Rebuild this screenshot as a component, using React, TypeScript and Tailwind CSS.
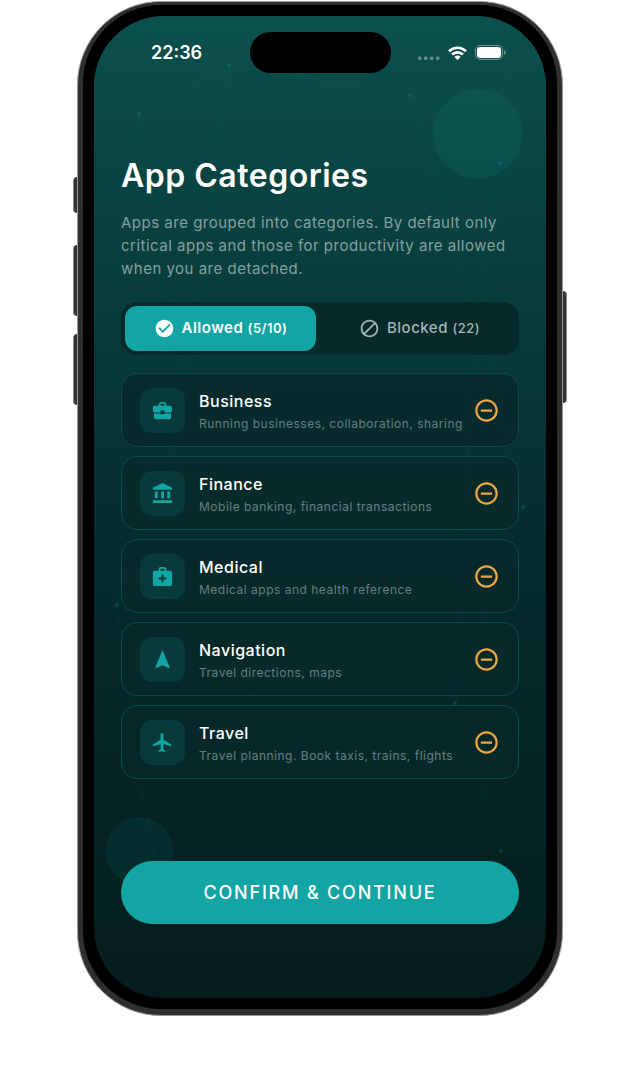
import React, { useState } from "react";
import {
  MdAccountBalance,
  MdBlock,
  MdBusinessCenter,
  MdCheckCircle,
  MdFlight,
  MdMedicalServices,
  MdNavigation,
  MdRemoveCircleOutline,
} from "react-icons/md";
import type { IconType } from "react-icons";

type Category = {
  name: string;
  description: string;
  icon: IconType;
};

const categories: Category[] = [
  {
    name: "Business",
    description: "Running businesses, collaboration, sharing",
    icon: MdBusinessCenter,
  },
  {
    name: "Finance",
    description: "Mobile banking, financial transactions",
    icon: MdAccountBalance,
  },
  {
    name: "Medical",
    description: "Medical apps and health reference",
    icon: MdMedicalServices,
  },
  {
    name: "Navigation",
    description: "Travel directions, maps",
    icon: MdNavigation,
  },
  {
    name: "Travel",
    description: "Travel planning. Book taxis, trains, flights",
    icon: MdFlight,
  },
];

const nodes = [
  [45, 98],
  [135, 49],
  [316, 79],
  [406, 147],
  [429, 491],
  [361, 687],
  [407, 835],
  [23, 589],
];

const Constellation = () => (
  <svg
    className="absolute inset-0 h-full w-full"
    viewBox="0 0 452 982"
    preserveAspectRatio="none"
    fill="none"
    aria-hidden="true"
  >
    <circle cx="384" cy="118" r="45" fill="#12a5a3" fillOpacity="0.1" />
    <circle cx="45.5" cy="835" r="34" fill="#12a5a3" fillOpacity="0.09" />
    <g stroke="#12a5a3" strokeOpacity="0.08">
      <path d="M45 98 135 49 316 79 406 147" />
      <path d="M45 98 91 394M135 49 91 394 23 589 46 764 62 850" />
      <path d="M316 79 396 349 429 491 361 687 407 835" />
      <path d="M406 147 379 344 361 687" />
    </g>
    {nodes.map(([x, y]) => (
      <circle
        key={`${x}-${y}`}
        cx={x}
        cy={y}
        r="2"
        fill="#12a5a3"
        fillOpacity="0.2"
      />
    ))}
  </svg>
);

const StatusBar = () => (
  <div className="grid h-[41px] grid-cols-[1fr_141px_1fr] items-center">
    <span className="pl-[57px] text-lg font-semibold">22:36</span>
    <span className="h-full rounded-full bg-black" />
    <div className="flex items-center justify-end gap-2 pr-10">
      <svg width="22" height="14" viewBox="0 0 22 14" aria-hidden="true">
        <g fill="#ffffff" fillOpacity="0.35">
          <rect x="0" y="10.5" width="3.5" height="3.5" rx="1" />
          <rect x="6" y="10.5" width="3.5" height="3.5" rx="1" />
          <rect x="12" y="10.5" width="3.5" height="3.5" rx="1" />
          <rect x="18" y="10.5" width="3.5" height="3.5" rx="1" />
        </g>
      </svg>
      <svg width="19" height="14" viewBox="0 0 19 14" aria-hidden="true">
        <g fill="none" stroke="#ffffff" strokeWidth="2.7">
          <path d="M1 5.2a12.2 12.2 0 0 1 17 0" />
          <path d="M4.1 8.5a7.7 7.7 0 0 1 10.8 0" />
        </g>
        <path
          d="M9.5 14 6.4 10.9a4.5 4.5 0 0 1 6.2 0z"
          fill="#ffffff"
        />
      </svg>
      <svg width="31" height="15" viewBox="0 0 31 15" aria-hidden="true">
        <rect
          x="0.5"
          y="0.5"
          width="27"
          height="14"
          rx="4.5"
          fill="none"
          stroke="#ffffff"
          strokeOpacity="0.4"
        />
        <rect x="2" y="2" width="24" height="11" rx="3.2" fill="#ffffff" />
        <path d="M29 5a2.7 2.7 0 0 1 0 5z" fill="#ffffff" fillOpacity="0.4" />
      </svg>
    </div>
  </div>
);

const CategoryCard = ({ name, description, icon: Icon }: Category) => (
  <li className="flex h-[74px] items-center rounded-2xl border border-[#0b4b4b] bg-[#08292a]/80 pr-5 pl-[18px]">
    <span className="flex size-[45px] shrink-0 items-center justify-center rounded-xl bg-[#093a3b]">
      <Icon size={23} color="#12a5a3" />
    </span>
    <div className="ml-[14px] min-w-0 flex-1 pt-[3px]">
      <h2 className="text-base leading-6 font-medium">{name}</h2>
      <p className="text-xs leading-[22px] whitespace-nowrap text-[#658082]">
        {description}
      </p>
    </div>
    <button type="button" aria-label={`Remove ${name}`} className="-mr-0.5">
      <MdRemoveCircleOutline size={27} color="#efa742" />
    </button>
  </li>
);

const App: React.FC = () => {
  const [tab, setTab] = useState<"allowed" | "blocked">("allowed");

  const getTabClass = (active: boolean) =>
    active
      ? "bg-[#12a5a3] font-semibold text-white"
      : "font-medium text-[#a3b4b5]";

  return (
    <div className="flex min-h-screen items-start justify-center bg-white pt-px font-[Inter,sans-serif] text-white">
      <div className="relative w-full max-w-[486px]">
        <span className="absolute top-[176px] -left-1 h-9 w-2 rounded-l-sm border-l border-[#8a8a8a] bg-[#333333]" />
        <span className="absolute top-[244px] -left-1 h-[71px] w-2 rounded-l-sm border-l border-[#8a8a8a] bg-[#333333]" />
        <span className="absolute top-[333px] -left-1 h-[71px] w-2 rounded-l-sm border-l border-[#8a8a8a] bg-[#333333]" />
        <span className="absolute top-[290px] -right-1 h-[112px] w-2 rounded-r-sm border-r border-[#8a8a8a] bg-[#333333]" />

        <div className="relative rounded-[84px] border border-[#9a9a9a] bg-[#2f2f2f] px-[5px] pt-[3px] pb-[6px]">
          <div className="rounded-[78px] bg-black p-[11px]">
            <main className="relative overflow-hidden rounded-[70px] bg-linear-to-b from-[#0b504d] via-[#062e2f] to-[#041d1c]">
              <Constellation />
              <div className="relative pt-4">
                <StatusBar />

                <div className="px-[27px] pt-[83px] pb-[74px] tracking-[0.5px]">
                  <h1 className="text-[32px] leading-10 font-semibold">
                    App Categories
                  </h1>
                  <p className="mt-[15px] text-[15px] leading-[23px] text-[#84a09f]">
                    Apps are grouped into categories. By default only critical
                    apps and those for productivity are allowed when you are
                    detached.
                  </p>

                  <div className="mt-[22px] grid h-[53px] grid-cols-2 gap-2 rounded-2xl bg-[#06292a] p-1">
                    <button
                      type="button"
                      aria-pressed={tab === "allowed"}
                      onClick={() => setTab("allowed")}
                      className={`flex items-center justify-center gap-[7px] rounded-xl text-[15px] ${getTabClass(tab === "allowed")}`}
                    >
                      <MdCheckCircle size={21} />
                      <span>
                        Allowed <span className="text-[13px]">(5/10)</span>
                      </span>
                    </button>
                    <button
                      type="button"
                      aria-pressed={tab === "blocked"}
                      onClick={() => setTab("blocked")}
                      className={`flex items-center justify-center gap-[7px] rounded-xl text-[15px] ${getTabClass(tab === "blocked")}`}
                    >
                      <MdBlock size={21} />
                      <span>
                        Blocked <span className="text-[13px]">(22)</span>
                      </span>
                    </button>
                  </div>

                  <ul className="mt-[18px] flex flex-col gap-[9px]">
                    {categories.map((category) => (
                      <CategoryCard key={category.name} {...category} />
                    ))}
                  </ul>

                  <button
                    type="button"
                    className="mt-[82px] flex h-[63px] w-full items-center justify-center rounded-full bg-[#12a5a3] text-lg font-medium tracking-widest"
                  >
                    CONFIRM &amp; CONTINUE
                  </button>
                </div>
              </div>
            </main>
          </div>
        </div>
      </div>
    </div>
  );
};

export default App;
